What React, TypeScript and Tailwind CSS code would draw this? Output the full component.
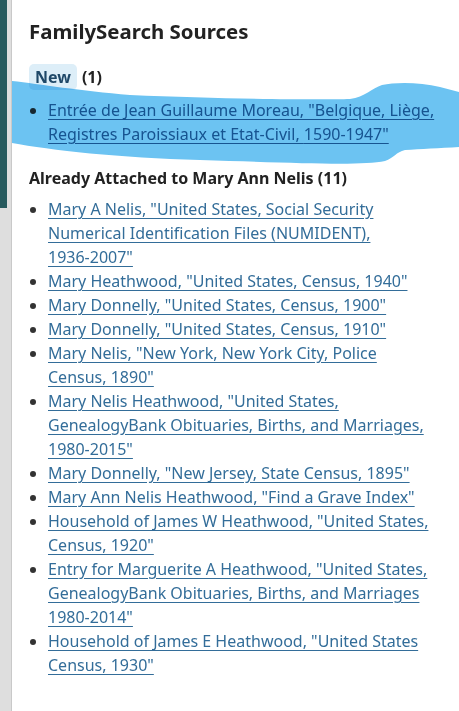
const attached = [
  'Mary A Nelis, "United States, Social Security Numerical Identification Files (NUMIDENT), 1936-2007"',
  'Mary Heathwood, "United States, Census, 1940"',
  'Mary Donnelly, "United States, Census, 1900"',
  'Mary Donnelly, "United States, Census, 1910"',
  'Mary Nelis, "New York, New York City, Police Census, 1890"',
  'Mary Nelis Heathwood, "United States, GenealogyBank Obituaries, Births, and Marriages, 1980-2015"',
  'Mary Donnelly, "New Jersey, State Census, 1895"',
  'Mary Ann Nelis Heathwood, "Find a Grave Index"',
  'Household of James W Heathwood, "United States, Census, 1920"',
  'Entry for Marguerite A Heathwood, "United States, GenealogyBank Obituaries, Births, and Marriages 1980-2014"',
  'Household of James E Heathwood, "United States Census, 1930"',
]

// year ranges like 1936-2007 stay on one line
function Title({ text }: { text: string }) {
  const parts = text.split(/(\d{4}-\d{4}"?)/)
  return (
    <>
      {parts.map((p, i) =>
        /^\d{4}-\d{4}/.test(p) ? (
          <span key={i} className="whitespace-nowrap">
            {p}
          </span>
        ) : (
          p
        ),
      )}
    </>
  )
}

function Highlight() {
  return (
    <svg
      className="pointer-events-none absolute left-0 top-0 mix-blend-multiply"
      width="459"
      height="711"
      viewBox="0 0 459 711"
    >
      <path
        d="M12 81 C 40 84 80 91 130 95 C 220 99 320 100 350 99 C 365 97 372 88 382 85 C 395 82 420 82 440 87 L 459 92 L 459 147 C 440 148 420 149 405 150 C 396 152 394 158 385 161 C 360 166 300 163 200 160 C 120 158 50 150 12 143 Z"
        fill="#6cc3f2"
      />
    </svg>
  )
}

export default function App() {
  return (
    <div
      className="relative flex min-h-[711px] w-[459px] bg-white"
      style={{ fontFamily: '"Noto Sans", "Open Sans", sans-serif' }}
    >
      <div className="flex w-[12px] flex-col bg-[#dedede] border-r border-[#c9c9c9]">
        <div className="h-[208px] w-[7px] bg-[#275a5e]" />
      </div>
      <div className="flex-1 pl-[17px] pr-[20px] pt-[16px]">
        <h2 className="text-[20.4px] font-bold leading-[30px] text-[#222]">FamilySearch Sources</h2>

        <div className="mt-[18px] flex items-center gap-[5px] text-[16px] font-bold leading-[26px]">
          <span className="rounded-[5px] bg-[#ddeef8] px-[6px] text-[#1f4868]">New</span>
          <span className="text-[#222]">(1)</span>
        </div>
        <ul className="mt-[8px] list-disc pl-[19px] text-[16px] leading-[24px] text-[#333]">
          <li>
            <a href="#" className="text-[#336d99] underline underline-offset-[3px]">
              <Title text={'Entrée de Jean Guillaume Moreau, "Belgique, Liège, Registres Paroissiaux et Etat-Civil, 1590-1947"'} />
            </a>
          </li>
        </ul>

        <h3 className="mt-[20px] text-[16px] font-bold leading-[24px] text-[#222]">
          Already Attached to Mary Ann Nelis (11)
        </h3>
        <ul className="mt-[7px] list-disc pl-[19px] text-[16px] leading-[24px] text-[#333]">
          {attached.map((s) => (
            <li key={s}>
              <a href="#" className="text-[#336d99] underline underline-offset-[3px]">
                <Title text={s} />
              </a>
            </li>
          ))}
        </ul>
      </div>
      <Highlight />
    </div>
  )
}
